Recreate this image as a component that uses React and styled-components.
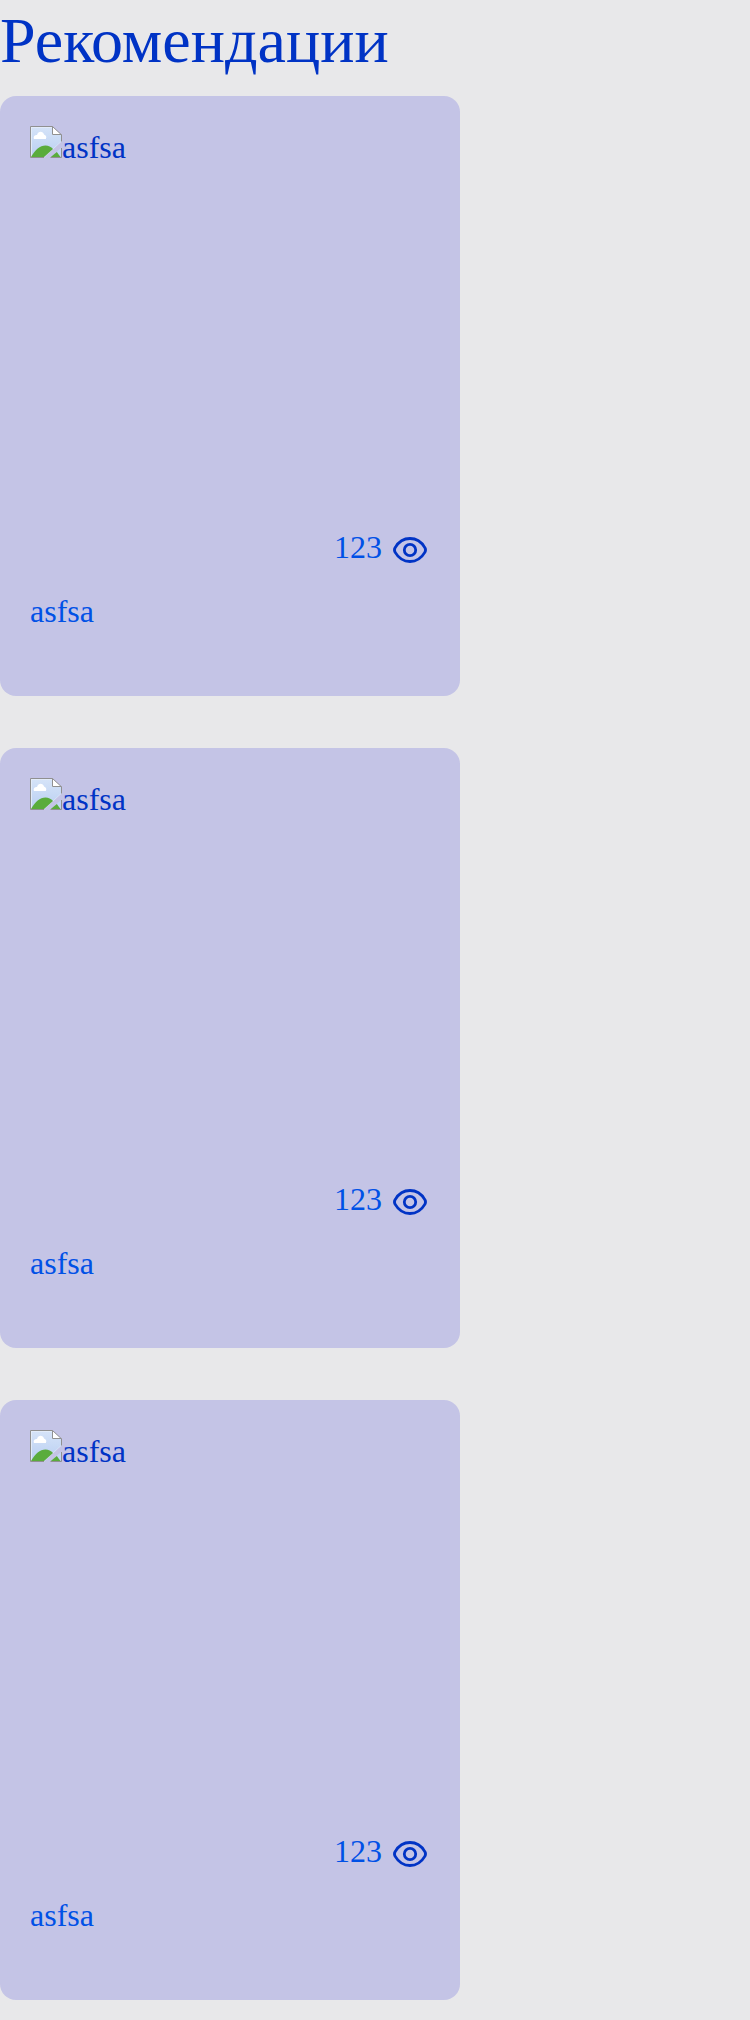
import React from "react";
import styled, { createGlobalStyle } from "styled-components";

const GlobalStyle = createGlobalStyle`
  * { box-sizing: border-box; }
  body {
    margin: 0;
    background: #e8e8ea;
    color: #0033c5;
    font-family: "Liberation Serif", "Times New Roman", serif;
    font-size: 32px;
  }
`;

const Title = styled.h1`
  margin: 0;
  height: 96px;
  padding-top: 4px;
  font-size: 64px;
  font-weight: 400;
  line-height: 74px;
`;

const CardList = styled.main`
  display: flex;
  flex-direction: column;
  gap: 52px;
  padding-bottom: 20px;
`;

const Card = styled.article`
  display: flex;
  flex-direction: column;
  width: 460px;
  height: 600px;
  padding: 30px;
  border-radius: 16px;
  background: #c4c4e6;
`;

const Preview = styled.div`
  display: flex;
  align-items: flex-start;
  height: 400px;
`;

const PreviewIcon = styled.svg`
  flex: none;
  width: 32px;
  height: 32px;
`;

const PreviewLabel = styled.span`
  margin-top: 3px;
  line-height: 36px;
`;

const Views = styled.div`
  display: flex;
  justify-content: flex-end;
  gap: 8px;
  height: 64px;
  color: #0051e6;
  line-height: 36px;
`;

const ViewCount = styled.span`
  margin-top: 3px;
`;

const EyeIcon = styled.svg`
  width: 40px;
  height: 40px;
  margin-top: 4px;
  color: #0033c5;
`;

const Caption = styled.p`
  margin: 3px 0 0;
  color: #0051e6;
  line-height: 36px;
`;

const cards = [
  { id: 1, name: "asfsa", views: 123 },
  { id: 2, name: "asfsa", views: 123 },
  { id: 3, name: "asfsa", views: 123 },
];

function MissingImage() {
  return (
    <PreviewIcon viewBox="0 0 32 32" aria-hidden="true">
      <defs>
        <linearGradient id="sky" x1="0" y1="0" x2="0" y2="1">
          <stop offset="0" stopColor="#d5e3f8" />
          <stop offset="1" stopColor="#b9cff2" />
        </linearGradient>
      </defs>
      <path d="M.5.5H22L31.5 9V15.5L14 31.5H.5Z" fill="#e8effb" />
      <path d="M1.8 1.8H22V9H31V15.5L14 31H1.8Z" fill="url(#sky)" />
      <path d="M31 22V31H21Z" fill="#c3d6f5" />
      <path d="M4 13C3 10.5 4.8 9 7 9C8 5 13 4.8 14 8.4C16 9 17 11 15.8 13Z" fill="#fff" />
      <path d="M1 31C5 24 10 19.6 15.5 19.6C18.5 19.6 21 21 23 23L14 31Z" fill="#5aac3c" />
      <path d="M20.8 31L26.8 26L30.5 31Z" fill="#5aac3c" />
      <path d="M22.5.8V8.5H31Z" fill="#fff" />
      <path d="M14 31.5H.5V.5H22.5L31.5 8.8V15.5M22.5.5V8.5H31.5M31.5 22V31.5H20.5" fill="none" stroke="#909090" />
    </PreviewIcon>
  );
}

function Eye() {
  return (
    <EyeIcon viewBox="0 0 40 40" fill="none" stroke="currentColor" strokeWidth="2.8" aria-hidden="true">
      <path d="M20 8.5C12.8 8.5 8.1 12.6 5.2 17.6C4.2 19.2 4.2 20.8 5.2 22.4C8.1 27.4 12.8 31.5 20 31.5C27.2 31.5 31.9 27.4 34.8 22.4C35.8 20.8 35.8 19.2 34.8 17.6C31.9 12.6 27.2 8.5 20 8.5Z" />
      <circle cx="20" cy="20" r="5.7" />
    </EyeIcon>
  );
}

function RecommendationCard({ name, views }) {
  return (
    <Card>
      <Preview>
        <MissingImage />
        <PreviewLabel>{name}</PreviewLabel>
      </Preview>
      <Views>
        <ViewCount>{views}</ViewCount>
        <Eye />
      </Views>
      <Caption>{name}</Caption>
    </Card>
  );
}

export default function App() {
  return (
    <>
      <GlobalStyle />
      <Title>Рекомендации</Title>
      <CardList>
        {cards.map((card) => (
          <RecommendationCard key={card.id} name={card.name} views={card.views} />
        ))}
      </CardList>
    </>
  );
}
